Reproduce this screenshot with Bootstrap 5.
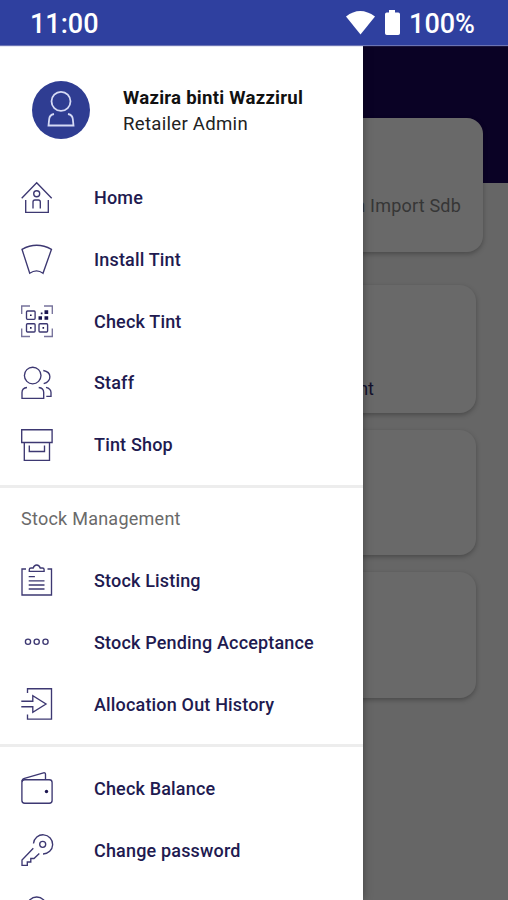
<!DOCTYPE html>
<html lang="en">
<head>
<meta charset="utf-8">
<meta name="viewport" content="width=device-width, initial-scale=1">
<title>Menu</title>
<link href="https://cdn.jsdelivr.net/npm/bootstrap@5.3.0/dist/css/bootstrap.min.css" rel="stylesheet">
<style>
body{font-family:Roboto,"Liberation Sans",sans-serif;height:900px;background:#666}
.status{height:45px;background:#2f409f;font-size:27px;font-weight:500;padding:3px 33px 0 30px;box-shadow:0 1px 1px #6b74b5;z-index:3}
.status svg{margin-top:-2px}
.stage{height:855px}
.hero{height:138px;background:#0a0225;padding:73px 25px 0 20px}
.tile{background:#696969;border:0;border-radius:16px;box-shadow:0 2px 5px rgba(0,0,0,.28)}
.tile-top{height:134px;padding:43px 22px 0 0;font-size:18px;color:#363636;line-height:26px;letter-spacing:.2px}
.tiles{padding:102px 32px 0 20px;display:grid;grid-template-rows:128px 125px 126px;row-gap:17px}
.tile-name{font-size:18px;color:#14122c;padding:0 102px 11px 0}
.drawer{top:0;left:0;width:362.5px;height:855px;background:#fff;box-shadow:0 0 9px rgba(0,0,0,.35);z-index:2}
.who{height:122px;padding:36px 0 0 32px;gap:33px}
.avatar{width:58px;height:58px;background:#2f3d92}
.who-name{font-size:18.6px;font-weight:700;line-height:26px;color:#111;letter-spacing:.25px}
.who-role{font-size:18.6px;line-height:27px;color:#222;letter-spacing:.28px}
.entry{height:61.7px;padding-left:21px;gap:41px;font-size:18px;font-weight:500;color:#211a50;letter-spacing:.17px}
.entry svg{width:32px;height:32px;fill:none;stroke:#3d3872;stroke-width:1.35;overflow:visible;flex:none}
.entry .solid{fill:#1c1650;stroke:none}
.rule{height:3px;background:#ededed}
.rule-a{margin-top:9.5px}
.rule-b{margin:9px 0 10.5px}
.heading{font-size:18px;color:#6a6a6a;letter-spacing:.25px;padding-left:21px;height:62px}
</style>
<script src="https://cdn.jsdelivr.net/npm/bootstrap@5.3.0/dist/js/bootstrap.bundle.min.js"></script>
</head>
<body class="overflow-hidden">
<header class="status d-flex align-items-center justify-content-between text-white position-relative">
  <span class="clock">11:00</span>
  <span class="d-flex align-items-center">
    <svg class="me-2" width="56" height="28" viewBox="0 0 56 28" fill="#fff"><path d="M1 7.500Q15-3.500 30 7.500L15.500 25.500Z"/><path d="M44 1h6v2.500h3.200q1.800 0 1.800 1.800v19q0 1.700-1.800 1.700H41.800q-1.800 0-1.800-1.700v-19q0-1.800 1.800-1.800H44Z"/></svg>
    <span class="percent">100%</span>
  </span>
</header>
<main class="stage position-relative overflow-hidden">
  <section>
    <div class="hero"><div class="card tile tile-top text-end"><span class="pt-4 mt-2">Syarikat Perniagaan Import Sdb</span></div></div>
    <div class="tiles">
      <div class="card tile justify-content-end text-end"><span class="tile-name">Management</span></div>
      <div class="card tile"></div>
      <div class="card tile"></div>
    </div>
  </section>
  <nav class="drawer position-absolute overflow-hidden">
    <div class="who d-flex">
      <svg class="avatar rounded-circle" viewBox="0 0 58 58" fill="none" stroke="#d5daf5" stroke-width="1.8"><circle cx="29" cy="20.3" r="9.5"/><path d="M22 33Q17.500 34 17.200 38L16.500 44.500H41.500L40.800 38Q40.500 34 36 33"/></svg>
      <div><div class="who-name pt-1">Wazira binti Wazzirul</div><div class="who-role">Retailer Admin</div></div>
    </div>
    <div class="entry d-flex align-items-center"><svg viewBox="0 0 32 32"><path d="M.7 16.300 15.700.7l15 15.600M4.700 18v12.300h22.600V18M12 26.500V20q0-2 2-2h3.300q2 0 2 2v6.500"/><circle cx="15.700" cy="11.700" r="3"/></svg>Home</div>
    <div class="entry d-flex align-items-center"><svg viewBox="0 0 32 32"><path d="M1 5.300Q15.700-2.800 30.500 5.300L22 29.300Q15.700 24.500 8.700 29.300Z"/></svg>Install Tint</div>
    <div class="entry d-flex align-items-center"><svg viewBox="0 0 32 32"><path stroke="#77739c" d="M.7 9V1H9M23 1h8.300v8M.7 23.500v8H9M23 31.500h8.300v-8"/><rect x="5.500" y="6" width="8.600" height="8.300" rx="1"/><rect x="5.500" y="18.700" width="8.600" height="8.300" rx="1"/><rect x="18" y="18.700" width="8.600" height="8.300" rx="1"/><path class="solid" d="M23.500 5.300h3.700v3.600h-3.700zM23.500 11.300h3.700v3.400h-3.700zM17.500 11.300H21v3.400h-3.500zM19.800 7.500h1.700v1.700h-1.700zM9 9.400h1.600V11H9zM9 22.100h1.600v1.600H9zM21.500 22.100h1.600v1.600h-1.600z"/></svg>Check Tint</div>
    <div class="entry d-flex align-items-center"><svg viewBox="0 0 32 32"><circle cx="11.700" cy="8.500" r="8.300"/><path d="M22.300 3.500C31 5 31 14 22.700 16.700M6 20.500Q1 21 1 25.500v5.800h21.700v-5.800Q22.700 21 17.700 20.500M25 20.300Q30 21.500 30 25.500v3.800h-4.700"/></svg>Staff</div>
    <div class="entry d-flex align-items-center"><svg viewBox="0 0 32 32"><path d="M.7.7h30.400v12.800H.7zM3.300 13.500v17.800h25.200V13.500M8.300 16.500v6H23.500v-6"/></svg>Tint Shop</div>
    <div class="rule rule-a"></div>
    <div class="heading d-flex align-items-center">Stock Management</div>
    <div class="entry d-flex align-items-center"><svg viewBox="0 0 32 32"><path d="M5 4H1v26h29.500V4h-4M8.300 6.300V4.500Q8.300 3 10 3h2.200Q13 0 15.700 0t3.500 3h2.200q1.700 0 1.700 1.500v1.800ZM7.700 11.600h6.200M7.700 15.800H23.500M7.700 20H23.500M7.700 24H23.500"/></svg>Stock Listing</div>
    <div class="entry d-flex align-items-center"><svg viewBox="0 0 32 32"><circle cx="7" cy="15.700" r="2.600"/><circle cx="15.700" cy="15.700" r="2.600"/><circle cx="24.500" cy="15.700" r="2.600"/></svg>Stock Pending Acceptance</div>
    <div class="entry d-flex align-items-center"><svg viewBox="0 0 32 32"><path d="M6.500 5V.7h24v30.400h-24v-4.500M.3 13.200h11.500V7.700L25 16 11.800 24.300v-5.600H.3"/></svg>Allocation Out History</div>
    <div class="rule rule-b"></div>
    <div class="entry d-flex align-items-center"><svg viewBox="0 0 32 32"><rect x=".9" y="7.700" width="30.200" height="23.500" rx="2.800"/><path d="M.9 9.500Q1 7 3.500 6.300L22.500.8Q24.500.4 24.500 2.500v4.500"/><circle class="solid" cx="25.500" cy="19.500" r="1.700"/></svg>Check Balance</div>
    <div class="entry d-flex align-items-center"><svg viewBox="0 0 32 32"><path d="M12.500 9.500A9.600 9.600 0 1 1 22 20M12.300 14.300 1 26v5.300h5.300V28h3.500v-3.500H13l5.300-5"/><circle cx="21.700" cy="10.300" r="3"/></svg>Change password</div>
    <div class="entry d-flex align-items-center"><svg viewBox="0 0 32 32"><circle cx="15.700" cy="10.500" r="9.500"/></svg></div>
  </nav>
</main>
</body>
</html>
